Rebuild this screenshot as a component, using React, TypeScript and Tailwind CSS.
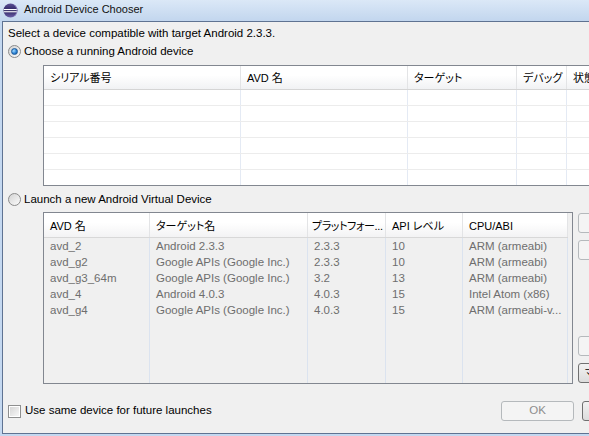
import React from 'react';

const jp = "[font-feature-settings:'palt']";

const runningCols = [
  { label: 'シリアル番号', w: 'w-[197px]' },
  { label: 'AVD 名', w: 'w-[167px]' },
  { label: 'ターゲット', w: 'w-[109px]' },
  { label: 'デバッグ', w: 'w-[50px]' },
  { label: '状態', w: 'flex-1' },
];

const avdCols = [
  { label: 'AVD 名', w: 'w-[106px]', extra: '' },
  { label: 'ターゲット名', w: 'w-[158px]', extra: '' },
  { label: 'プラットフォー...', w: 'w-[78px]', extra: 'text-[10.5px] tracking-[-0.4px] !pl-[4px]' },
  { label: 'API レベル', w: 'w-[77px]', extra: '' },
  { label: 'CPU/ABI', w: 'w-[105px]', extra: '' },
];

const avds = [
  ['avd_2', 'Android 2.3.3', '2.3.3', '10', 'ARM (armeabi)'],
  ['avd_g2', 'Google APIs (Google Inc.)', '2.3.3', '10', 'ARM (armeabi)'],
  ['avd_g3_64m', 'Google APIs (Google Inc.)', '3.2', '13', 'ARM (armeabi)'],
  ['avd_4', 'Android 4.0.3', '4.0.3', '15', 'Intel Atom (x86)'],
  ['avd_g4', 'Google APIs (Google Inc.)', '4.0.3', '15', 'ARM (armeabi-v...'],
];

function Radio({ checked }: { checked?: boolean }) {
  return (
    <span className="flex h-[13px] w-[13px] shrink-0 items-center justify-center rounded-full border border-[#8b8b8b] bg-linear-to-br from-[#d4d4d4] to-[#fbfbfb]">
      {checked && (
        <span className="h-[7px] w-[7px] rounded-full border border-[#1b5a9a] bg-[radial-gradient(circle_at_35%_35%,#a6dcff,#2f86d8_55%,#124f8f)]" />
      )}
    </span>
  );
}

function Checkbox() {
  return (
    <span className="flex h-[13px] w-[13px] shrink-0 border border-[#8e8f8f] bg-white p-[1px]">
      <span className="flex-1 bg-linear-to-br from-[#d6d6d6] to-[#f7f7f7]" />
    </span>
  );
}

function Button({ label, active, className }: { label: string; active?: boolean; className: string }) {
  return (
    <div
      className={`flex h-[20px] shrink-0 items-center justify-center overflow-hidden whitespace-nowrap rounded-[3px] border ${
        active
          ? 'border-[#707070] bg-linear-to-b from-[#f2f2f2] to-[#dcdcdc] text-black'
          : 'border-[#b5b9bc] bg-[#f4f4f4] text-[#8d8d8d]'
      } ${className}`}
    >
      {label}
    </div>
  );
}

function EclipseIcon() {
  return (
    <svg width="16" height="16" viewBox="0 0 16 16">
      <defs>
        <linearGradient id="ecl" x1="0" y1="0" x2="0" y2="1">
          <stop offset="0" stopColor="#5b4f94" />
          <stop offset="0.5" stopColor="#2c2461" />
          <stop offset="1" stopColor="#6c5fa8" />
        </linearGradient>
      </defs>
      <circle cx="7.5" cy="7.5" r="7" fill="url(#ecl)" />
      <rect x="0.8" y="6" width="13.4" height="1.1" fill="#ffffff" />
      <rect x="0.8" y="8.2" width="13.4" height="1.1" fill="#ffffff" />
      <path d="M9 1 A6.6 6.6 0 0 1 9 14 A7 7 0 0 0 9 1 Z" fill="#a99bd9" opacity="0.6" />
    </svg>
  );
}

export default function App() {
  return (
    <div className="flex h-[436px] w-[589px] flex-col overflow-hidden bg-[#c4d8f0] font-['Liberation_Sans','Noto_Sans_CJK_JP',sans-serif] text-[11.5px] text-black">
      {/* Title bar */}
      <div className="flex h-[21px] shrink-0 items-center bg-linear-to-b from-[#dbe8f7] to-[#c2d6ee] pl-[3px]">
        <EclipseIcon />
        <span className="ml-[5px] pb-[3px] text-[11px] text-[#111]">Android Device Chooser</span>
      </div>

      <div className="flex shrink-0">
        <div className="w-[2px] shrink-0" />
        {/* Client area */}
        <div className="flex h-[413px] w-[670px] shrink-0 flex-col border-t border-b border-l border-[#5f7392] bg-[#f0f0f0] pl-[5px]">
          <div className="mt-[4px] h-[14px] leading-[14px]">Select a device compatible with target Android 2.3.3.</div>

          <div className="mt-[4px] flex h-[14px] items-center gap-[3px] leading-[14px]">
            <Radio checked />
            <span>Choose a running Android device</span>
          </div>

          {/* Running devices table */}
          <div className="ml-[35px] mt-[7px] flex h-[121px] w-[619px] flex-col border border-[#828790] bg-white">
            <div className="flex h-[24px] shrink-0 border-b border-[#d5d5d5] bg-linear-to-b from-[#ffffff] from-40% to-[#f1f2f4]">
              {runningCols.map((c) => (
                <div
                  key={c.label}
                  className={`${c.w} flex shrink-0 items-center border-r border-[#e3e4e6] pl-[6px] pt-[1px] text-[11px] ${jp}`}
                >
                  {c.label}
                </div>
              ))}
            </div>
            {[0, 1, 2, 3, 4, 5].map((r) => (
              <div key={r} className={`flex ${r < 5 ? 'h-[16px] border-b border-[#ececec]' : 'flex-1'}`}>
                {runningCols.map((c) => (
                  <div key={c.label} className={`${c.w} shrink-0 border-r border-[#e4eaf4]`} />
                ))}
              </div>
            ))}
          </div>

          <div className="mt-[6px] flex h-[14px] items-center gap-[3px] leading-[14px]">
            <Radio />
            <span>Launch a new Android Virtual Device</span>
          </div>

          {/* AVD table + side buttons */}
          <div className="ml-[35px] mt-[6px] flex h-[172px] gap-[5px]">
            <div className="flex w-[530px] shrink-0 flex-col border border-[#828790] bg-[#f0f0f0] pr-[4px]">
              <div className="flex h-[25px] shrink-0 border-b border-[#d8d8d8] bg-linear-to-b from-[#ffffff] from-40% to-[#f3f3f4]">
                {avdCols.map((c) => (
                  <div
                    key={c.label}
                    className={`${c.w} flex shrink-0 items-center overflow-hidden whitespace-nowrap border-r border-[#e3e4e6] pl-[6px] pt-[3px] text-[11px] ${jp} ${c.extra}`}
                  >
                    {c.label}
                  </div>
                ))}
              </div>
              <div className="flex flex-1">
                {avdCols.map((c, ci) => (
                  <div key={c.label} className={`${c.w} shrink-0 border-r border-[#dbe3ef] text-[#6e6e6e]`}>
                    {avds.map((row) => (
                      <div key={row[0]} className="h-[16px] overflow-hidden whitespace-nowrap pl-[6px] leading-[16px]">
                        {row[ci]}
                      </div>
                    ))}
                  </div>
                ))}
              </div>
            </div>

            <div className="flex w-[84px] shrink-0 flex-col justify-between py-[1px]">
              <div className="flex flex-col gap-[7px]">
                <Button label="開始..." className="w-[84px]" />
                <Button label="詳細..." className="w-[84px]" />
              </div>
              <div className="flex flex-col gap-[7px]">
                <Button label="リフレッシュ" className={`w-[84px] ${jp} text-[11px]`} />
                <Button label="マネージャー..." active className={`w-[84px] ${jp} text-[11px]`} />
              </div>
            </div>
          </div>

          {/* Bottom row */}
          <div className="mt-[17px] flex h-[20px] w-[653px] items-center">
            <Checkbox />
            <span className="ml-[4px]">Use same device for future launches</span>
            <div className="ml-auto flex gap-[8px]">
              <Button label="OK" className="w-[73px]" />
              <Button label="キャンセル" active className={`w-[79px] ${jp} text-[11px]`} />
            </div>
          </div>
        </div>
      </div>
    </div>
  );
}
